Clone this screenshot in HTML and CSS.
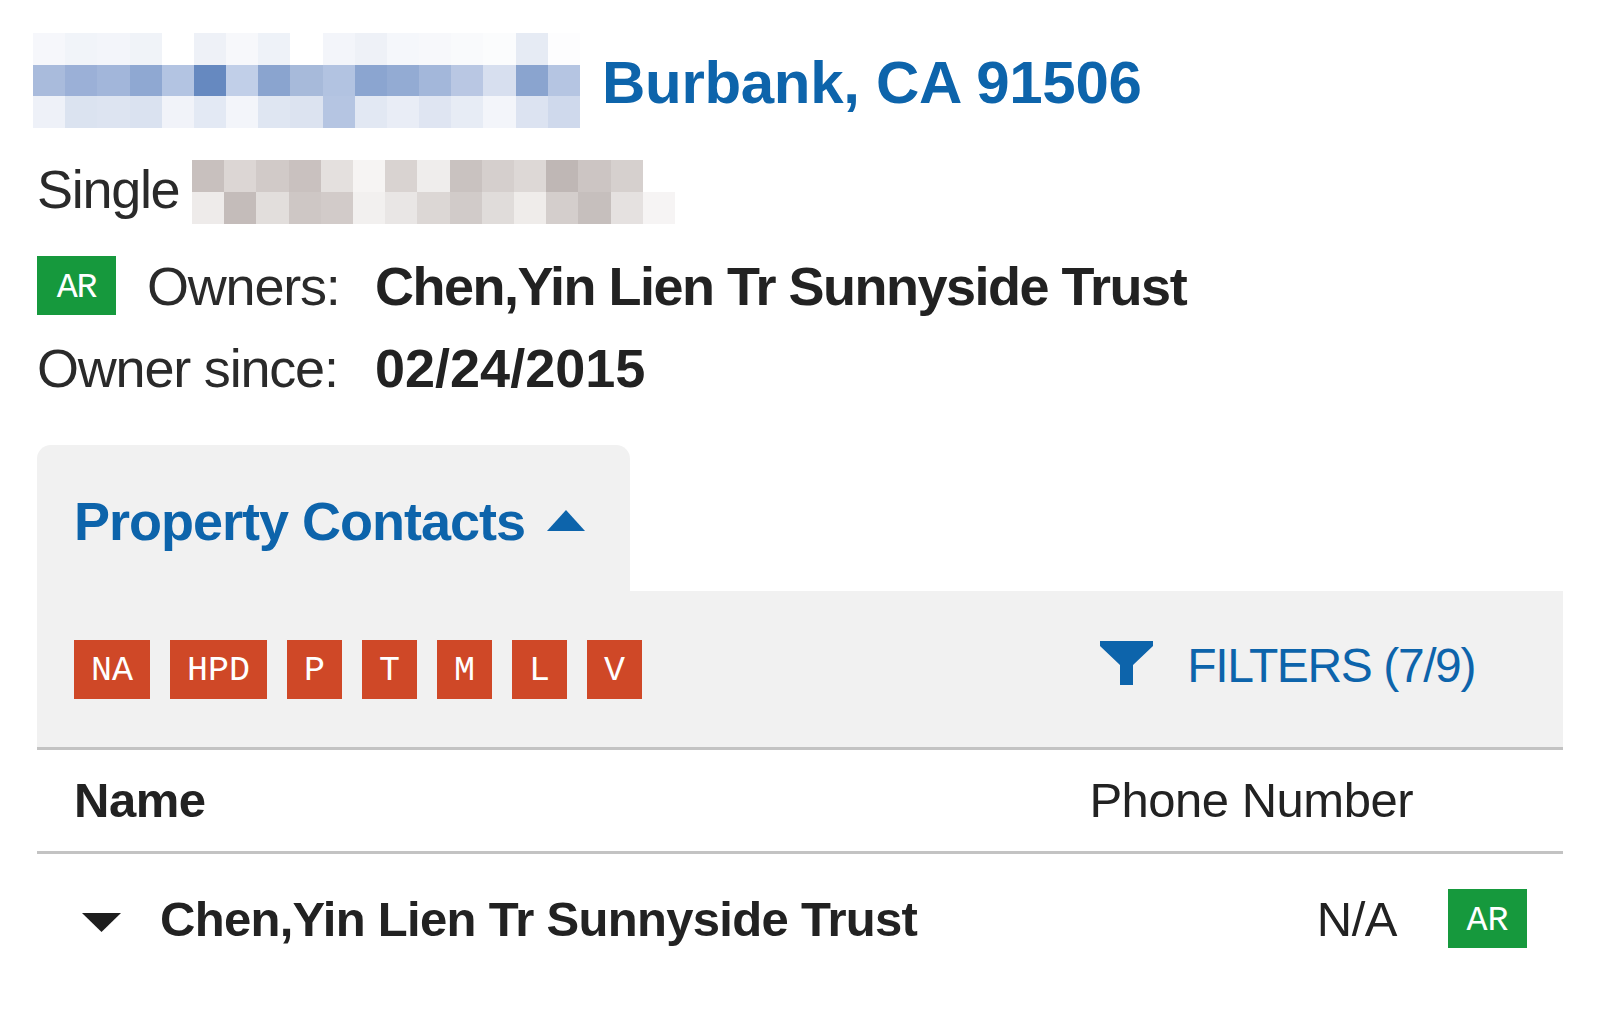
FILE: index.html
```html
<!DOCTYPE html>
<html lang="en">
<head>
<meta charset="utf-8">
<title>Property</title>
<link rel="stylesheet" href="styles.css">
</head>
<body>
<div class="page">
  <div class="addr-row">
    <svg class="mosaic mosaic-addr" width="547" height="95" viewBox="0 0 17 3" preserveAspectRatio="none" shape-rendering="crispEdges">
      <g>
        <rect x="0" y="0" width="1" height="1" fill="#f6f7fb"/><rect x="1" y="0" width="1" height="1" fill="#f1f4f9"/><rect x="2" y="0" width="1" height="1" fill="#f3f5fa"/><rect x="3" y="0" width="1" height="1" fill="#f0f3f8"/><rect x="4" y="0" width="1" height="1" fill="#ffffff"/><rect x="5" y="0" width="1" height="1" fill="#eef1f7"/><rect x="6" y="0" width="1" height="1" fill="#f7f8fb"/><rect x="7" y="0" width="1" height="1" fill="#eef2f8"/><rect x="8" y="0" width="1" height="1" fill="#ffffff"/><rect x="9" y="0" width="1" height="1" fill="#f3f5fa"/><rect x="10" y="0" width="1" height="1" fill="#eef1f7"/><rect x="11" y="0" width="1" height="1" fill="#f5f7fb"/><rect x="12" y="0" width="1" height="1" fill="#f7f8fb"/><rect x="13" y="0" width="1" height="1" fill="#f9fafc"/><rect x="14" y="0" width="1" height="1" fill="#fbfcfd"/><rect x="15" y="0" width="1" height="1" fill="#e6ebf4"/><rect x="16" y="0" width="1" height="1" fill="#fdfdfe"/>
        <rect x="0" y="1" width="1" height="1" fill="#a9bbdc"/><rect x="1" y="1" width="1" height="1" fill="#9bb0d7"/><rect x="2" y="1" width="1" height="1" fill="#a2b6da"/><rect x="3" y="1" width="1" height="1" fill="#8fa8d2"/><rect x="4" y="1" width="1" height="1" fill="#b3c4e2"/><rect x="5" y="1" width="1" height="1" fill="#6689c0"/><rect x="6" y="1" width="1" height="1" fill="#c1cfe8"/><rect x="7" y="1" width="1" height="1" fill="#8aa4cf"/><rect x="8" y="1" width="1" height="1" fill="#a7bada"/><rect x="9" y="1" width="1" height="1" fill="#b2c3e1"/><rect x="10" y="1" width="1" height="1" fill="#8ba5d0"/><rect x="11" y="1" width="1" height="1" fill="#93abd3"/><rect x="12" y="1" width="1" height="1" fill="#a3b7da"/><rect x="13" y="1" width="1" height="1" fill="#b9c7e3"/><rect x="14" y="1" width="1" height="1" fill="#d7dfef"/><rect x="15" y="1" width="1" height="1" fill="#8aa4cf"/><rect x="16" y="1" width="1" height="1" fill="#b5c5e2"/>
        <rect x="0" y="2" width="1" height="1" fill="#eef1f8"/><rect x="1" y="2" width="1" height="1" fill="#dbe3f0"/><rect x="2" y="2" width="1" height="1" fill="#dde4f1"/><rect x="3" y="2" width="1" height="1" fill="#dae2f0"/><rect x="4" y="2" width="1" height="1" fill="#f1f3f9"/><rect x="5" y="2" width="1" height="1" fill="#e3e9f4"/><rect x="6" y="2" width="1" height="1" fill="#f3f5fa"/><rect x="7" y="2" width="1" height="1" fill="#dfe6f2"/><rect x="8" y="2" width="1" height="1" fill="#dce3f0"/><rect x="9" y="2" width="1" height="1" fill="#b5c5e2"/><rect x="10" y="2" width="1" height="1" fill="#e2e8f3"/><rect x="11" y="2" width="1" height="1" fill="#e9edf6"/><rect x="12" y="2" width="1" height="1" fill="#dfe5f2"/><rect x="13" y="2" width="1" height="1" fill="#e7ecf5"/><rect x="14" y="2" width="1" height="1" fill="#f3f5fa"/><rect x="15" y="2" width="1" height="1" fill="#dce3f1"/><rect x="16" y="2" width="1" height="1" fill="#cfd9ec"/>
      </g>
    </svg>
    <h1 class="city">Burbank, CA 91506</h1>
  </div>

  <div class="type-row">
    <span class="type-label">Single</span>
    <svg class="mosaic mosaic-type" width="483" height="64" viewBox="0 0 15 2" preserveAspectRatio="none" shape-rendering="crispEdges">
      <g>
        <rect x="0" y="0" width="1" height="1" fill="#c8c0be"/><rect x="1" y="0" width="1" height="1" fill="#dcd6d4"/><rect x="2" y="0" width="1" height="1" fill="#d1cac8"/><rect x="3" y="0" width="1" height="1" fill="#c9c1bf"/><rect x="4" y="0" width="1" height="1" fill="#e4e0de"/><rect x="5" y="0" width="1" height="1" fill="#f6f4f3"/><rect x="6" y="0" width="1" height="1" fill="#d9d3d1"/><rect x="7" y="0" width="1" height="1" fill="#efedec"/><rect x="8" y="0" width="1" height="1" fill="#c9c2c0"/><rect x="9" y="0" width="1" height="1" fill="#d5cfcd"/><rect x="10" y="0" width="1" height="1" fill="#ddd8d6"/><rect x="11" y="0" width="1" height="1" fill="#bfb7b5"/><rect x="12" y="0" width="1" height="1" fill="#ccc5c3"/><rect x="13" y="0" width="1" height="1" fill="#d6d0ce"/><rect x="14" y="0" width="1" height="1" fill="#ffffff"/>
        <rect x="0" y="1" width="1" height="1" fill="#eeebea"/><rect x="1" y="1" width="1" height="1" fill="#c4bcba"/><rect x="2" y="1" width="1" height="1" fill="#e2dedc"/><rect x="3" y="1" width="1" height="1" fill="#cec7c5"/><rect x="4" y="1" width="1" height="1" fill="#d2cbc9"/><rect x="5" y="1" width="1" height="1" fill="#f2f0ef"/><rect x="6" y="1" width="1" height="1" fill="#e9e6e5"/><rect x="7" y="1" width="1" height="1" fill="#dcd7d5"/><rect x="8" y="1" width="1" height="1" fill="#d1cbc9"/><rect x="9" y="1" width="1" height="1" fill="#e0dcda"/><rect x="10" y="1" width="1" height="1" fill="#efecea"/><rect x="11" y="1" width="1" height="1" fill="#d4cecc"/><rect x="12" y="1" width="1" height="1" fill="#c6bfbd"/><rect x="13" y="1" width="1" height="1" fill="#e5e1e0"/><rect x="14" y="1" width="1" height="1" fill="#f6f4f4"/>
      </g>
    </svg>
  </div>

  <div class="info-row">
    <div class="info-label"><span class="badge badge-green">AR</span><span class="owners-label">Owners:</span></div>
    <div class="info-value">Chen,Yin Lien Tr Sunnyside Trust</div>
  </div>
  <div class="info-row info-row-since">
    <div class="info-label">Owner since:</div>
    <div class="info-value">02/24/2015</div>
  </div>

  <section class="contacts">
    <div class="tab">
      <span class="tab-title">Property Contacts</span>
      <svg class="caret-up" width="38" height="21" viewBox="0 0 38 21"><path d="M19 0 L38 21 H0 Z" fill="#0d64ab"/></svg>
    </div>
    <div class="filter-bar">
      <div class="tags">
        <span class="badge badge-red">NA</span>
        <span class="badge badge-red">HPD</span>
        <span class="badge badge-red">P</span>
        <span class="badge badge-red">T</span>
        <span class="badge badge-red">M</span>
        <span class="badge badge-red">L</span>
        <span class="badge badge-red">V</span>
      </div>
      <div class="filters">
        <svg class="funnel" width="53" height="44" viewBox="0 0 53 44"><path d="M0 0 H53 V5 L33 24 V44 H20 V24 L0 5 Z" fill="#0d64ab"/></svg>
        <span class="filters-text">FILTERS (7/9)</span>
      </div>
    </div>
    <div class="table-head">
      <span class="th-name">Name</span>
      <span class="th-phone">Phone Number</span>
    </div>
    <div class="table-row">
      <svg class="caret-down" width="39" height="19" viewBox="0 0 39 19"><path d="M0 0 H39 L19.5 19 Z" fill="#1e1e1e"/></svg>
      <span class="td-name">Chen,Yin Lien Tr Sunnyside Trust</span>
      <span class="td-phone">N/A</span>
      <span class="badge badge-green">AR</span>
    </div>
  </section>
</div>
</body>
</html>
```

FILE: styles.css
```css
html, body {
  margin: 0;
  padding: 0;
  background: #ffffff;
}

body {
  font-family: "Liberation Sans", Arial, Helvetica, sans-serif;
  color: #222222;
}

.page {
  padding: 33px 37px 0 37px;
  width: 1526px;
}

.mosaic {
  display: block;
  flex: none;
}

/* address row */
.addr-row {
  display: flex;
  align-items: center;
  height: 95px;
}

.mosaic-addr {
  margin-left: -4px;
}

.city {
  margin: 0 0 0 22px;
  font-size: 60px;
  line-height: 1;
  font-weight: 700;
  letter-spacing: -0.3px;
  color: #0d64ab;
  padding-top: 4px;
}

/* type row */
.type-row {
  display: flex;
  align-items: center;
  height: 64px;
  margin-top: 32px;
}

.type-label {
  font-size: 54px;
  line-height: 1;
  letter-spacing: -1.3px;
  color: #2a2a2a;
  padding-bottom: 6px;
}

.mosaic-type {
  margin-left: 13px;
}

/* owner rows */
.info-row {
  display: flex;
  align-items: center;
  height: 59px;
  margin-top: 32px;
}

.info-row-since {
  margin-top: 23px;
}

.info-label {
  width: 338px;
  flex: none;
  display: flex;
  align-items: center;
  font-size: 54px;
  line-height: 1;
  letter-spacing: -1.2px;
  color: #2a2a2a;
}

.owners-label {
  margin-left: 31px;
}

.info-value {
  font-size: 54px;
  line-height: 1;
  font-weight: 700;
  letter-spacing: -1.5px;
  color: #222222;
}

.info-row-since .info-value {
  letter-spacing: 0;
}

/* badges */
.badge {
  display: inline-flex;
  align-items: center;
  justify-content: center;
  height: 59px;
  padding: 5px 17px 0 17px;
  box-sizing: border-box;
  font-family: "Liberation Mono", "DejaVu Sans Mono", monospace;
  font-size: 35px;
  line-height: 1;
  color: #ffffff;
  flex: none;
}

.badge-green {
  background: #16993d;
  width: 79px;
  padding: 6px 0 0 0;
}

.badge-red {
  background: #cf4827;
}

/* contacts */
.contacts {
  margin-top: 48px;
}

.tab {
  width: 593px;
  height: 146px;
  box-sizing: border-box;
  background: #f1f1f1;
  border-radius: 14px 14px 0 0;
  display: flex;
  align-items: center;
  padding-left: 37px;
  padding-top: 6px;
}

.tab-title {
  font-size: 54px;
  line-height: 1;
  font-weight: 700;
  letter-spacing: -1px;
  color: #0d64ab;
}

.caret-up {
  display: block;
  margin-left: 22px;
  margin-top: -2px;
}

.filter-bar {
  height: 159px;
  box-sizing: border-box;
  background: #f1f1f1;
  border-bottom: 3px solid #c3c3c3;
  display: flex;
  align-items: center;
  justify-content: space-between;
  padding: 0 88px 0 37px;
}

.tags {
  display: flex;
  gap: 20px;
}

.filters {
  display: flex;
  align-items: center;
}

.funnel {
  display: block;
  margin-top: -12px;
}

.filters-text {
  margin-left: 34px;
  font-size: 48px;
  line-height: 1;
  letter-spacing: -1.4px;
  color: #0d64ab;
  margin-top: -6px;
}

/* table */
.table-head {
  height: 104px;
  box-sizing: border-box;
  border-bottom: 3px solid #c3c3c3;
  display: flex;
  align-items: center;
  justify-content: space-between;
  padding: 0 150px 0 37px;
}

.th-name {
  font-size: 49px;
  line-height: 1;
  font-weight: 700;
  letter-spacing: -0.5px;
  color: #222222;
}

.th-phone {
  font-size: 49px;
  line-height: 1;
  letter-spacing: -0.5px;
  color: #222222;
}

.table-row {
  height: 128px;
  display: flex;
  align-items: center;
  padding: 0 36px 0 45px;
}

.caret-down {
  display: block;
  flex: none;
  margin-top: 8px;
}

.td-name {
  margin-left: 39px;
  font-size: 49px;
  line-height: 1;
  font-weight: 700;
  letter-spacing: -0.7px;
  color: #222222;
  padding-top: 3px;
}

.td-phone {
  margin-left: auto;
  margin-right: 51px;
  font-size: 49px;
  line-height: 1;
  letter-spacing: -0.5px;
  color: #222222;
  padding-top: 3px;
}
```
